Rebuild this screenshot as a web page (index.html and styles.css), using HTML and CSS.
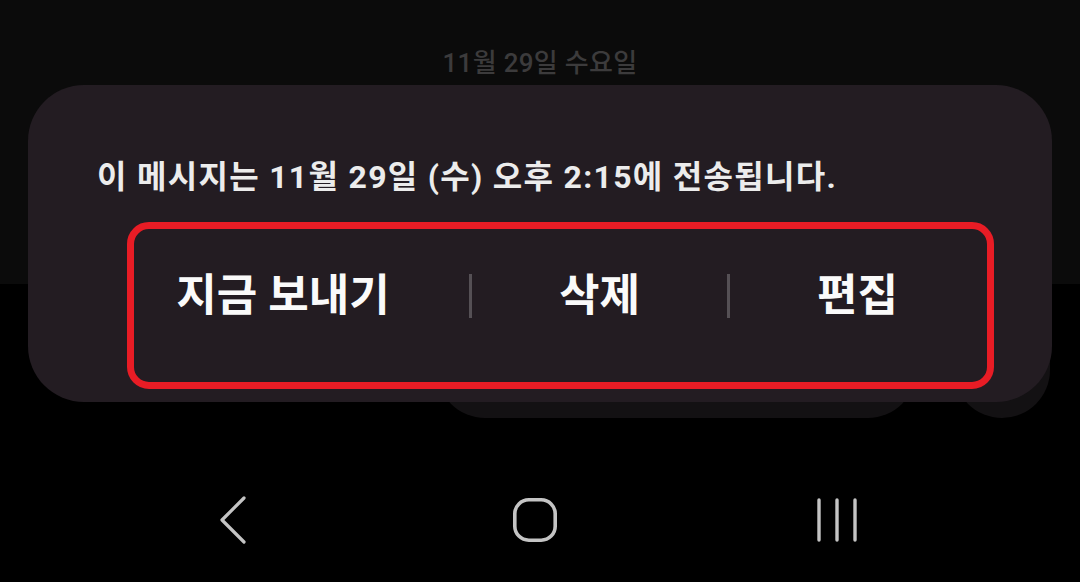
FILE: index.html
```html
<!DOCTYPE html>
<html lang="ko">
<head>
<meta charset="utf-8">
<link rel="stylesheet" href="styles.css">
</head>
<body>
<div class="screen">
  <header class="top">
    <div class="date">11월 29일 수요일</div>
  </header>
  <div class="lower">
    <div class="ghost-pill"></div>
    <div class="ghost-circle"></div>
  </div>
  <nav class="navbar">
    <div class="nav-item">
      <svg width="60" height="50" viewBox="0 0 60 50"><polyline points="41,3 19,25 41,47" fill="none" stroke="#c4c4c4" stroke-width="3.2" stroke-linecap="round" stroke-linejoin="round"/></svg>
    </div>
    <div class="nav-item">
      <svg width="60" height="50" viewBox="0 0 60 50"><rect x="9.8" y="4.8" width="40.4" height="40.4" rx="14" fill="none" stroke="#c4c4c4" stroke-width="3.6"/></svg>
    </div>
    <div class="nav-item">
      <svg width="60" height="50" viewBox="0 0 60 50"><g stroke="#c4c4c4" stroke-width="3.4" stroke-linecap="round"><line x1="12" y1="5" x2="12" y2="45"/><line x1="30" y1="5" x2="30" y2="45"/><line x1="48" y1="5" x2="48" y2="45"/></g></svg>
    </div>
  </nav>

  <div class="popup">
    <p class="message">이 메시지는 11월 29일 (수) 오후 2:15에 전송됩니다.</p>
    <div class="actions">
      <button class="action action-send">지금 보내기</button>
      <span class="divider"></span>
      <button class="action action-delete">삭제</button>
      <span class="divider"></span>
      <button class="action action-edit">편집</button>
    </div>
  </div>
  <div class="highlight"></div>
</div>
</body>
</html>
```
FILE: styles.css
```css
* { box-sizing: border-box; }
html, body { margin: 0; padding: 0; background: #000; }
body { width: 1080px; height: 582px; overflow: hidden; font-family: Roboto, "Noto Sans CJK KR", sans-serif; }

.screen { position: relative; width: 1080px; height: 582px; display: flex; flex-direction: column; background: #000; }

.top { height: 284px; background: #0b0b0b; display: flex; justify-content: center; padding-top: 46px; }
.date { font-size: 26px; font-weight: 500; color: #3c3b3c; line-height: 34px; letter-spacing: 0.3px; }

.lower { position: relative; height: 176px; }
.ghost-pill { position: absolute; left: 437px; top: 0; width: 479px; height: 134px; background: #131113; border-radius: 0 0 48px 48px; }
.ghost-circle { position: absolute; left: 954px; top: 0; width: 96px; height: 134px; background: #131113; border-radius: 0 0 48px 48px; }

.navbar { height: 122px; display: flex; justify-content: center; align-items: flex-start; gap: 242px; padding-top: 35px; padding-right: 10px; }
.nav-item { width: 60px; height: 50px; display: flex; }

.popup { position: absolute; left: 28px; top: 85px; width: 1024px; height: 317px; background: #231c22; border-radius: 56px; padding: 72px 0 0 69px; }
.message { margin: 0; font-size: 32px; line-height: 40px; font-weight: 700; color: #ececec; letter-spacing: 1.3px; white-space: nowrap; }

.actions { display: flex; align-items: center; margin-top: 69px; height: 60px; }
.action { background: none; border: 0; padding: 0; font-family: Roboto, "Noto Sans CJK KR", sans-serif; font-size: 44px; font-weight: 700; color: #fafafa; line-height: 60px; display: flex; justify-content: center; }
.action-send { width: 372px; }
.action-delete { width: 255px; }
.action-edit { width: 255px; }
.divider { width: 3px; height: 44px; background: #555055; flex: none; }

.highlight { position: absolute; left: 127px; top: 222px; width: 867px; height: 167px; border: 7px solid #e81c25; border-radius: 22px; pointer-events: none; }
```
